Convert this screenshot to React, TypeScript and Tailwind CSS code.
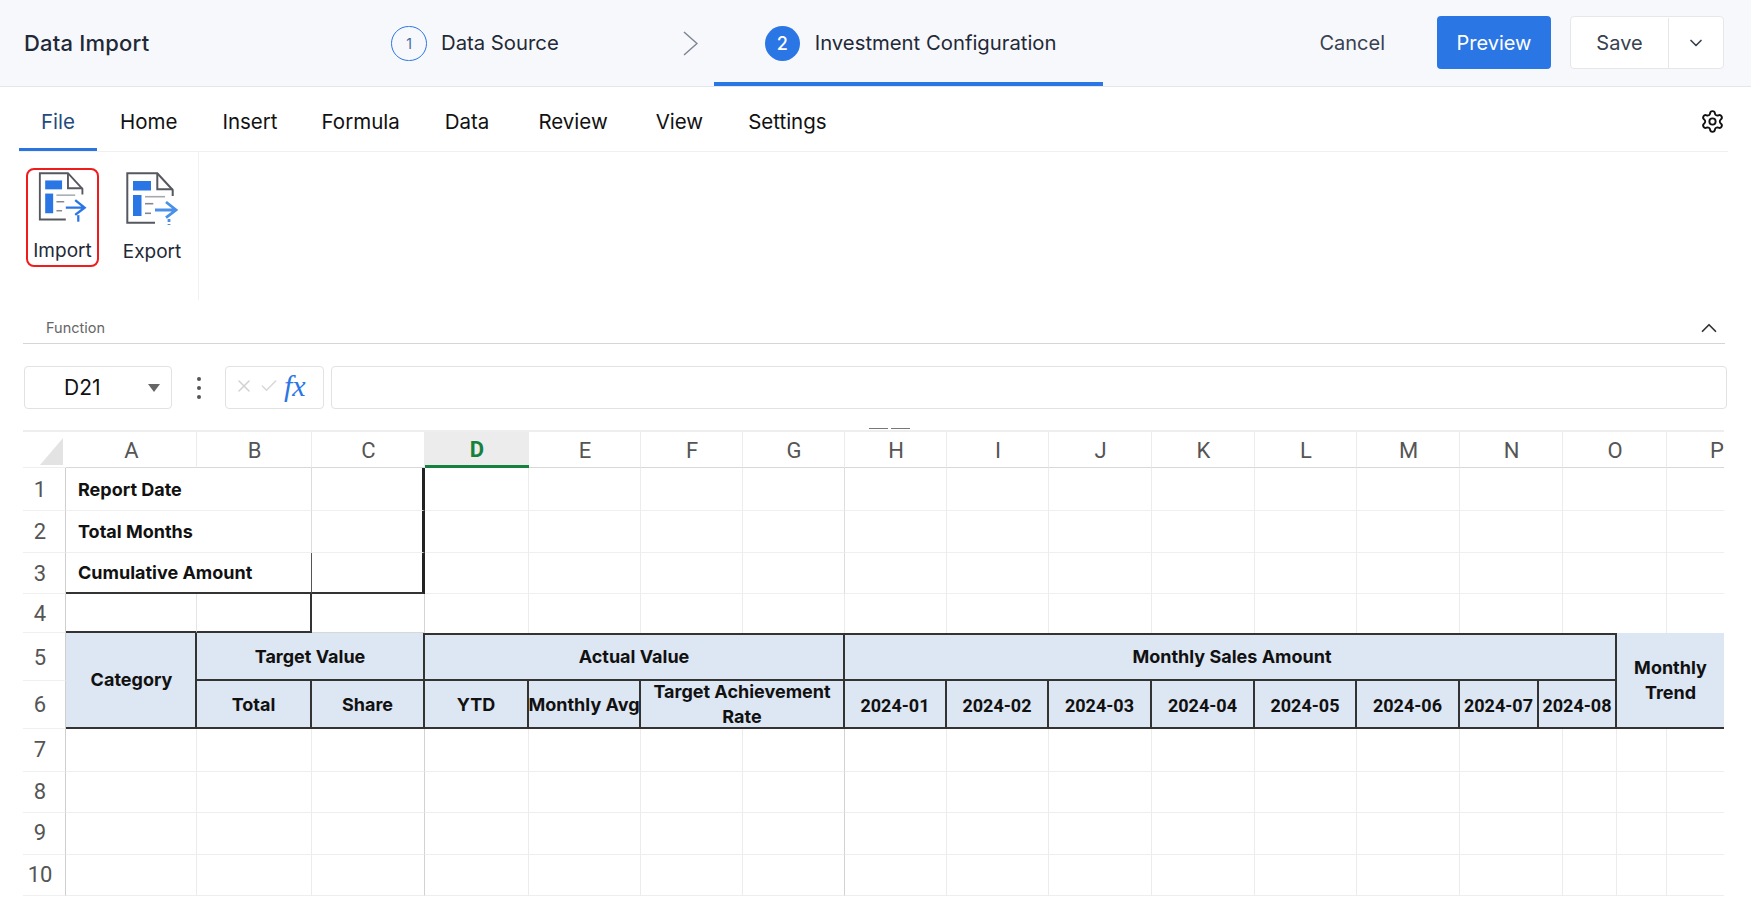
import React from 'react';
import { ChevronDown, ChevronUp, Settings, X, Check } from 'lucide-react';

// tab label and its nudge from the regular spacing
const tabs: [string, number][] = [
  ['File', 0], ['Home', 0], ['Insert', -1], ['Formula', -2], ['Data', -1], ['Review', 3], ['View', 2], ['Settings', -1],
];

// [label, first grid line, last grid line]
const letters: [string, number, number][] = [
  ['A', 2, 3], ['B', 3, 4], ['C', 4, 5], ['D', 5, 6], ['E', 6, 7], ['F', 7, 8], ['G', 8, 9], ['H', 9, 10],
  ['I', 10, 11], ['J', 11, 12], ['K', 12, 13], ['L', 13, 14], ['M', 14, 15], ['N', 15, 17], ['O', 17, 19], ['P', 19, 20],
];

const plainCols = letters.slice(3).map(l => [l[1], l[2]]);
const lowerCols = [
  [2, 3], [3, 4], [4, 5], [5, 6], [6, 7], [7, 8], [8, 9], [9, 10], [10, 11], [11, 12], [12, 13], [13, 14], [14, 15],
  [15, 17], [17, 18], [18, 19], [19, 20],
];

const months = [
  ['2024-01', 9, 10], ['2024-02', 10, 11], ['2024-03', 11, 12], ['2024-04', 12, 13],
  ['2024-05', 13, 14], ['2024-06', 14, 15], ['2024-07', 15, 16], ['2024-08', 16, 18],
] as [string, number, number][];

const Cell = ({ col, row, className = '', children }: { col: [number, number]; row: [number, number]; className?: string; children?: React.ReactNode }) => (
  <div
    style={{ gridColumn: `${col[0]} / ${col[1]}`, gridRow: `${row[0]} / ${row[1]}` }}
    className={`flex items-center overflow-hidden ${className}`}
  >
    {children}
  </div>
);

const headCell = "justify-center bg-[#dde6f3] text-center font-['Inter',sans-serif] text-[18px] leading-[25px] font-bold text-[#111]";
const dateCell = "justify-center bg-[#dde6f3] pt-[2px] text-center font-['Roboto',sans-serif] text-[18px] font-bold text-[#111] whitespace-nowrap border-b-2 border-r-2 border-[#333]";
const rowHeadText = 'border-b border-r border-b-[#efefef] border-r-[#cfcfcf] justify-center pr-2 text-[22px] text-[#555]';
const labelCell = "pl-[12px] font-['Inter',sans-serif] text-[18px] font-bold text-[#111]";

const FileIcon = ({ exporting }: { exporting?: boolean }) => (
  <svg width="52" height="56" viewBox="0 0 52 56" fill="none">
    <path d="M46.7 24V18L31.3 1.3H1.3V50.7H29" stroke="#55585f" strokeWidth="2" />
    <path d="M31.3 1.3V17.3H46.7" stroke="#55585f" strokeWidth="2" />
    <rect x="7" y="9" width="18" height="9.5" fill="#2b76e5" />
    <rect x="7" y="23" width="8.5" height="21" fill="#2b76e5" />
    <path d="M19 24.7H39" stroke="#a5a8ad" strokeWidth="1.6" />
    <path d="M19 31.7H27.3" stroke="#85888d" strokeWidth="1.6" />
    <path d="M19 41.3H25" stroke="#85888d" strokeWidth="1.6" />
    {exporting ? (
      <>
        <path d="M29 38H50M40 30L50 38L40 45.7" stroke="#4a90e8" strokeWidth="2.8" />
        <path d="M43 47V53" stroke="#4a90e8" strokeWidth="2.8" strokeDasharray="3 2" />
      </>
    ) : (
      <>
        <path d="M29 38H49M39 30L49 38L39 45.7" stroke="#2b76e5" strokeWidth="2.6" />
        <path d="M42.3 46V53" stroke="#2b76e5" strokeWidth="2.4" />
      </>
    )}
  </svg>
);

const App = () => {
  return (
    <div className="w-[1751px] h-[898px] overflow-hidden bg-white font-['Inter',sans-serif] text-[20px] text-[#1f2937]">
      {/* Top bar */}
      <div className="flex h-[87px] items-center border-b border-[#e4e6ee] bg-[#f7f8fb]">
        <div className="w-[391px] pl-6 text-[22px] font-medium tracking-[0.2px]">Data Import</div>
        <div className="flex items-center gap-[14px] text-[20.3px]">
          <div className="flex h-[35px] w-[36px] items-center justify-center rounded-full border-[1.5px] border-[#2b76e5] text-[14px] text-[#3f6aa5]">1</div>
          <span>Data Source</span>
        </div>
        <svg className="ml-[124px]" width="15" height="25" viewBox="0 0 15 25" fill="none">
          <path d="M1 1L14 12.5L1 24" stroke="#7d8594" strokeWidth="1.5" />
        </svg>
        <div className="ml-[16px] flex h-full w-[389px] items-center gap-[15px] border-b-4 border-[#2b76e5] pl-[51px] pt-[4px] text-[20.3px]">
          <div className="flex h-[35px] w-[35px] items-center justify-center rounded-full bg-[#2b76e5] text-[18px] font-medium text-white">2</div>
          <span>Investment Configuration</span>
        </div>
        <span className="ml-auto text-[#374151]">Cancel</span>
        <button className="mb-[2px] ml-[52px] h-[53px] w-[114px] rounded bg-[#2b76e5] pt-[2px] text-white">Preview</button>
        <div className="mb-[2px] ml-[19px] mr-[27px] flex h-[53px] w-[154px] rounded border border-[#e5e7eb] bg-white pt-[1px] text-[#374151]">
          <div className="flex w-[98px] items-center justify-center border-r border-[#e5e7eb]">Save</div>
          <div className="flex flex-1 items-center justify-center">
            <ChevronDown size={20} strokeWidth={2} />
          </div>
        </div>
      </div>

      {/* Menu tabs */}
      <div className="mx-[19px] mr-[23px] flex h-[65px] items-center justify-between border-b border-[#f0f0f0] text-[20.5px] text-[#111]">
        <div className="flex h-full">
          {tabs.map(([tab, nudge], i) => (
            <div
              key={tab}
              style={{ marginLeft: nudge }}
              className={
                i === 0
                  ? 'flex items-center border-b-[3px] border-[#2a74df] px-[22px] pt-[9px] text-[#1f4b7d]'
                  : 'flex items-center px-[23px] pt-[6px]'
              }
            >
              {tab}
            </div>
          ))}
        </div>
        <Settings className="mr-[3px] mt-[4px]" size={25} strokeWidth={1.8} />
      </div>

      {/* Ribbon */}
      <div className="flex h-[148px]">
        <div className="flex w-[199px] items-start gap-[23px] border-r border-[#f0f0f0] pl-[26px] pt-[16px]">
          <div className="flex h-[99px] w-[73px] flex-col items-center rounded-lg border-2 border-[#f01c1c] pt-[2px] text-[19px]">
            <FileIcon />
            <span className="mt-[12px]">Import</span>
          </div>
          <div className="flex h-[99px] w-[60px] flex-col items-center pt-[4px] text-[19px]">
            <FileIcon exporting />
            <span className="mt-[10px]">Export</span>
          </div>
        </div>
      </div>

      {/* Function strip */}
      <div className="ml-[23px] mr-[26px] flex h-[44px] items-center justify-between border-b border-[#d4d6da] pl-[23px] pt-[12px] text-[14.5px] text-[#666]">
        <span>Function</span>
        <ChevronUp className="mr-[3px] text-[#333]" size={26} strokeWidth={1.6} />
      </div>

      {/* Formula bar */}
      <div className="ml-6 mr-[24px] mt-[22px] flex h-[43px] items-center">
        <div className="flex h-full w-[148px] items-center justify-between rounded-sm border border-[#e2e2e2] pl-[39px] pr-[11px] text-[21px] text-[#111]">
          <span>D21</span>
          <svg width="12" height="8" viewBox="0 0 12 8"><path d="M0 0H12L6 8Z" fill="#666" /></svg>
        </div>
        <div className="flex w-[53px] flex-col items-center gap-[5px]">
          <span className="h-1 w-1 rounded-full bg-[#555]" />
          <span className="h-1 w-1 rounded-full bg-[#555]" />
          <span className="h-1 w-1 rounded-full bg-[#555]" />
        </div>
        <div className="flex h-full w-[99px] items-center gap-[5px] rounded-sm border border-[#e2e2e2] pb-[3px] pl-[8px]">
          <X className="text-[#d2d2d2]" size={20} strokeWidth={1.8} />
          <Check className="text-[#d8d8d8]" size={20} strokeWidth={1.8} />
          <span className="font-['Liberation_Serif',serif] text-[30px] leading-none italic text-[#2b76e5]">fx</span>
        </div>
        <div className="ml-[7px] h-full flex-1 rounded-sm border border-[#e2e2e2]" />
      </div>

      {/* Split handle */}
      <div className="ml-[869px] mt-[19px] flex h-[1px] w-[41px] gap-[3px]">
        <span className="h-[1px] flex-1 bg-[#777]" />
        <span className="h-[1px] flex-1 bg-[#777]" />
      </div>

      {/* Sheet */}
      <div className="ml-[23px] mt-[1px] w-[1701px] border-t-2 border-[#eeeeee] font-['Roboto',sans-serif]">
        <div className="grid grid-cols-[43px_131px_115px_113px_104px_112px_102px_102px_102px_102px_103px_103px_102px_103px_79px_24px_54px_50px_57px] grid-rows-[36px_43px_42px_41px_39px_48px_48px_43px_41px_42px_41px]">
          <Cell col={[1, 2]} row={[1, 2]} className="justify-end border-b border-[#eeeeee]">
            <svg className="mr-[3px] mt-[4px]" width="23" height="27" viewBox="0 0 23 27"><path d="M23 0V27H0Z" fill="#e3e3e3" /></svg>
          </Cell>
          {letters.map(([label, a, b]) => (
            <Cell
              key={label}
              col={[a, b]}
              row={[1, 2]}
              className={
                label === 'D'
                  ? 'justify-center border-b-[3px] border-[#16813f] bg-[#ececec] pt-[2px] text-[22px] font-bold text-[#16813f]'
                  : label === 'P'
                    ? 'border-b border-[#d8d8d8] pt-[1px] text-[22px] text-[#555]'
                    : 'justify-center border-b border-r border-b-[#d8d8d8] border-r-[#ececec] pl-[1px] pt-[1px] text-[22px] text-[#555]'
              }
            >
              {label === 'P' ? <span className="ml-[43px]">P</span> : label}
            </Cell>
          ))}

          {/* Row numbers */}
          {[1, 2, 3, 4, 5, 6, 7, 8, 9, 10].map(n => (
            <Cell
              key={n}
              col={[1, 2]}
              row={[n + 1, n + 2]}
              className={`${rowHeadText} ${n === 5 ? 'pt-[2px]' : n >= 7 ? 'pb-[2px]' : ''}`}
            >
              {n}
            </Cell>
          ))}

          {/* Rows 1 to 3 */}
          <Cell col={[2, 4]} row={[2, 3]} className={`${labelCell} border-b border-r border-b-[#efefef] border-r-[#dcdcdc]`}>Report Date</Cell>
          <Cell col={[2, 4]} row={[3, 4]} className={`${labelCell} border-b border-r border-b-[#efefef] border-r-[#dcdcdc]`}>Total Months</Cell>
          <Cell col={[2, 4]} row={[4, 5]} className={`${labelCell} border-b-2 border-r border-b-[#333] border-r-[#555]`}>Cumulative Amount</Cell>
          <Cell col={[4, 5]} row={[2, 3]} className="border-b border-r-[3px] border-b-[#efefef] border-r-[#222]" />
          <Cell col={[4, 5]} row={[3, 4]} className="border-b border-r-[3px] border-b-[#efefef] border-r-[#222]" />
          <Cell col={[4, 5]} row={[4, 5]} className="border-b-2 border-r-[3px] border-b-[#333] border-r-[#222]" />
          {[2, 3, 4].map(r =>
            plainCols.map(([a, b]) => (
              <Cell
                key={`${r}-${a}`}
                col={[a, b]}
                row={[r, r + 1]}
                className={
                  b === 20
                    ? 'border-b border-[#efefef]'
                    : b === 9
                      ? 'border-b border-r border-b-[#efefef] border-r-[#dddddd]'
                      : 'border-b border-r border-b-[#efefef] border-r-[#ececec]'
                }
              />
            )),
          )}

          {/* Row 4 */}
          <Cell col={[2, 3]} row={[5, 6]} className="border-b-2 border-r border-b-[#333] border-r-[#e4e4e4]" />
          <Cell col={[3, 4]} row={[5, 6]} className="border-b-2 border-r-2 border-[#333]" />
          <Cell col={[4, 5]} row={[5, 6]} className="border-b border-r border-b-[#d8d8d8] border-r-[#d4d4d4]" />
          {plainCols.map(([a, b]) => (
            <Cell key={a} col={[a, b]} row={[5, 6]} className={b === 20 ? '' : 'border-r border-[#ececec]'} />
          ))}

          {/* Table header, rows 5 and 6 */}
          <Cell col={[2, 3]} row={[6, 8]} className={`${headCell} border-b-2 border-r-2 border-[#333] pb-[2px] pl-[2px]`}>Category</Cell>
          <Cell col={[3, 5]} row={[6, 7]} className={`${headCell} border-b-2 border-r-2 border-[#333]`}>Target Value</Cell>
          <Cell col={[3, 4]} row={[7, 8]} className={`${headCell} border-b-2 border-r-2 border-[#333]`}>Total</Cell>
          <Cell col={[4, 5]} row={[7, 8]} className={`${headCell} border-b-2 border-r-2 border-[#333]`}>Share</Cell>
          <Cell col={[5, 9]} row={[6, 7]} className={`${headCell} border-y-2 border-r-2 border-[#333] pb-[2px]`}>Actual Value</Cell>
          <Cell col={[5, 6]} row={[7, 8]} className={`${headCell} border-b-2 border-r-2 border-[#333]`}>YTD</Cell>
          <Cell col={[6, 7]} row={[7, 8]} className={`${headCell} whitespace-nowrap border-b-2 border-r-2 border-[#333] text-[17.5px]`}>Monthly Avg</Cell>
          <Cell col={[7, 9]} row={[7, 8]} className={`${headCell} leading-[23px] border-b-2 border-r-2 border-[#333]`}>
            <span>Target Achievement<br />Rate</span>
          </Cell>
          <Cell col={[9, 18]} row={[6, 7]} className={`${headCell} border-y-2 border-r-2 border-[#333] pb-[2px] pl-[4px]`}>Monthly Sales Amount</Cell>
          {months.map(([m, a, b]) => (
            <Cell key={m} col={[a, b]} row={[7, 8]} className={dateCell}>{m}</Cell>
          ))}
          <Cell col={[18, 20]} row={[6, 8]} className={`${headCell} border-b-2 border-[#333]`}>
            <span>Monthly<br />Trend</span>
          </Cell>

          {/* Rows 7 to 10 */}
          {[8, 9, 10, 11].map(r =>
            lowerCols.map(([a, b]) => (
              <Cell
                key={`${r}-${a}`}
                col={[a, b]}
                row={[r, r + 1]}
                className={
                  b === 20
                    ? 'border-b border-[#eeeeee]'
                    : b === 5 || b === 9
                      ? 'border-b border-r border-b-[#eeeeee] border-r-[#d2d2d2]'
                      : 'border-b border-r border-b-[#eeeeee] border-r-[#ececec]'
                }
              />
            )),
          )}
        </div>
      </div>
    </div>
  );
};

export default App;
